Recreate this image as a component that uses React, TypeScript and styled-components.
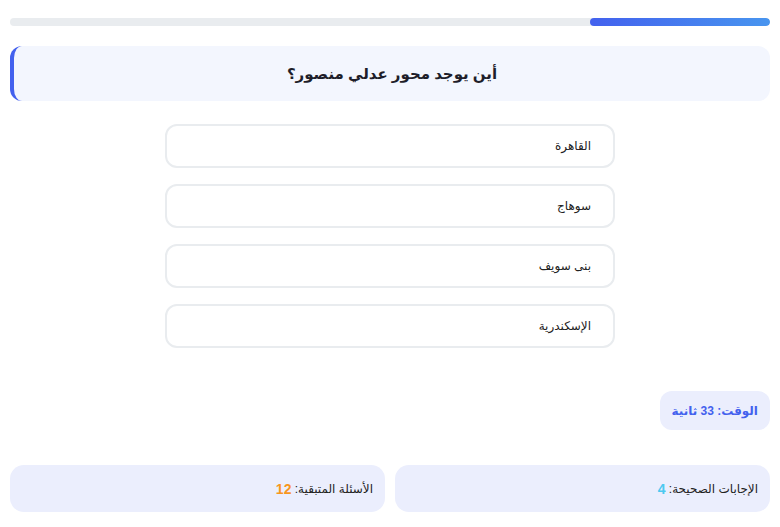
import React from "react";
import styled, { createGlobalStyle } from "styled-components";

const Global = createGlobalStyle`
  html, body { margin: 0; padding: 0; background: #ffffff; }
  body { font-family: "Liberation Sans", Arial, "DejaVu Sans", sans-serif; color: #222; }
  * { box-sizing: border-box; }
`;

const Page = styled.div`
  direction: rtl;
  width: 780px;
  padding: 18px 10px 0 10px;
  display: flex;
  flex-direction: column;
`;

const Track = styled.div`
  height: 8px;
  border-radius: 4px;
  background: #e9ecef;
  overflow: hidden;
  display: flex;
`;

const Fill = styled.div`
  height: 100%;
  border-radius: 4px;
  background: linear-gradient(90deg, #4361ee, #4895ef);
`;

const QuestionCard = styled.div`
  margin-top: 20px;
  height: 55px;
  background: #f3f6fe;
  border-radius: 12px;
  border-left: 4px solid #4361ee;
  display: flex;
  align-items: center;
  justify-content: center;
  font-size: 15px;
  font-weight: bold;
  color: #1e1e2a;
`;

const Options = styled.div`
  margin: 23px auto 0;
  width: 450px;
  display: flex;
  flex-direction: column;
  gap: 16px;
`;

const Option = styled.button`
  direction: rtl;
  height: 44px;
  border: 2px solid #e9ecef;
  border-radius: 12px;
  background: #ffffff;
  padding: 0 22px;
  text-align: right;
  font-family: inherit;
  font-size: 12px;
  color: #222;
  cursor: pointer;
`;

const TimerRow = styled.div`
  margin-top: 43px;
  display: flex;
`;

const Timer = styled.div`
  height: 39px;
  padding: 0 12px;
  border-radius: 12px;
  background: #ebeefd;
  color: #4361ee;
  font-weight: bold;
  font-size: 12px;
  display: flex;
  align-items: center;
`;

const Stats = styled.div`
  margin-top: 35px;
  display: grid;
  grid-template-columns: 1fr 1fr;
  gap: 10px;
`;

const StatCard = styled.div`
  height: 47px;
  border-radius: 14px;
  background: #ebeefd;
  padding: 0 12px;
  display: flex;
  align-items: center;
  font-size: 12px;
  color: #222;
`;

const StatValue = styled.span<{ $color: string }>`
  color: ${(p) => p.$color};
  font-weight: bold;
  font-size: 14px;
`;

const options = ["القاهرة", "سوهاج", "بنى سويف", "الإسكندرية"];

export default function App() {
  const progress = 23.7;
  return (
    <>
      <Global />
      <Page>
        <Track>
          <Fill style={{ width: `${progress}%` }} />
        </Track>
        <QuestionCard>أين يوجد محور عدلي منصور؟</QuestionCard>
        <Options>
          {options.map((o) => (
            <Option key={o}>{o}</Option>
          ))}
        </Options>
        <TimerRow>
          <Timer>الوقت: 33 ثانية</Timer>
        </TimerRow>
        <Stats>
          <StatCard>
            الإجابات الصحيحة:&nbsp;<StatValue $color="#4cc9f0">4</StatValue>
          </StatCard>
          <StatCard>
            الأسئلة المتبقية:&nbsp;<StatValue $color="#f8961e">12</StatValue>
          </StatCard>
        </Stats>
      </Page>
    </>
  );
}
